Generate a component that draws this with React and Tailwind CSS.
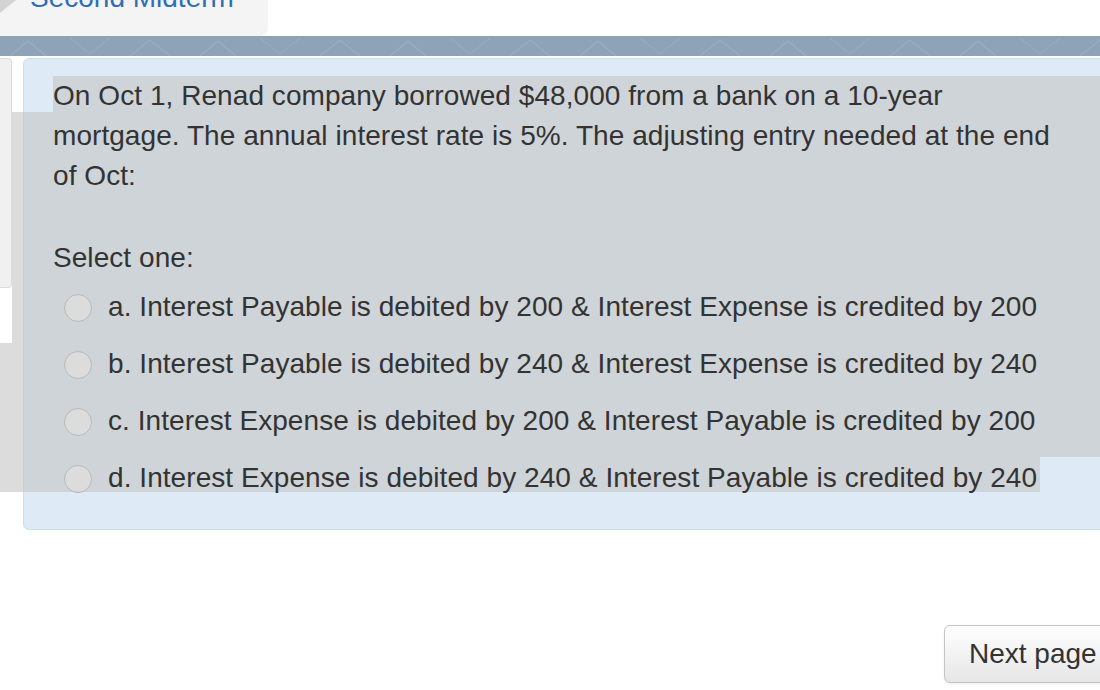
import React from "react";

const options = [
  "a. Interest Payable is debited by 200 & Interest Expense is credited by 200",
  "b. Interest Payable is debited by 240 & Interest Expense is credited by 240",
  "c. Interest Expense is debited by 200 & Interest Payable is credited by 200",
  "d. Interest Expense is debited by 240 & Interest Payable is credited by 240",
];

function BandPattern() {
  return (
    <svg width="1100" height="20" viewBox="0 0 1100 20" className="block">
      <defs>
        <pattern id="chev" width="190" height="20" patternUnits="userSpaceOnUse">
          <polyline points="10,20 28,5 46,20" fill="none" stroke="#a9b8c9" strokeWidth="1.2" opacity="0.45" />
          <polyline points="70,2 90,18 110,2" fill="none" stroke="#a9b8c9" strokeWidth="1.2" opacity="0.3" />
          <polyline points="130,20 150,4 170,20" fill="none" stroke="#a9b8c9" strokeWidth="1.2" opacity="0.4" />
        </pattern>
      </defs>
      <rect width="1100" height="20" fill="url(#chev)" />
    </svg>
  );
}

export default function App() {
  return (
    <div className="relative isolate w-[1100px] h-[690px] overflow-hidden bg-white font-['Liberation_Sans',Arial,sans-serif]">
      {/* Tab */}
      <div className="relative h-[36px] w-[268px] overflow-hidden rounded-br-[8px] bg-[#f4f4f4]">
        <svg width="16" height="13" viewBox="0 0 16 13" className="absolute left-0 top-0">
          <polygon points="0,0 16,0 0,13" fill="#d3d3d3" />
        </svg>
        <div className="mt-[-16px] pl-[30px] text-[28px] leading-[28px] whitespace-nowrap text-[#2f6eb3]">
          Second Midterm
        </div>
      </div>

      {/* Band */}
      <div className="h-[20px] bg-[#8fa3b8]">
        <BandPattern />
      </div>
      <div className="h-[2px]" />

      {/* Content row */}
      <div className="flex items-start">
        <div className="h-[230px] w-[12px] shrink-0 rounded-r-[4px] border border-l-0 border-[#dcdcdc] bg-[#f0f0f0]" />
        <div className="ml-[11px] w-[1110px] shrink-0">
          <div className="rounded-[6px] border border-[#c4e2ee] bg-[#deebf6] pt-[17px] pb-[23px] pl-[29px] text-[28px] tracking-[0.06px] text-[#333333]">
            <div className="leading-[40px] whitespace-nowrap">
              <span className="relative z-[2]">
                On Oct 1, Renad company borrowed $48,000 from a bank on a 10-year
                <br />
                mortgage. The annual interest rate is 5%. The adjusting entry needed at the end
                <br />
                of Oct:
              </span>
            </div>
            <div className="mt-[42px] leading-[40px]">
              <span className="relative z-[2]">Select one:</span>
            </div>
            <div className="flex flex-col">
              {options.map((o) => (
                <div key={o} className="flex h-[57px] items-center pl-[11px]">
                  <div className="mt-[3px] h-[28px] w-[28px] shrink-0 rounded-full border border-[#a8a8a8] bg-white" />
                  <span className="relative z-[2] ml-[16px] leading-[40px] whitespace-nowrap">{o}</span>
                </div>
              ))}
            </div>
          </div>
          <div className="mt-[95px] pl-[921px]">
            <button className="h-[58px] whitespace-nowrap rounded-[6px] border border-[#c4c4c4] bg-linear-to-b from-white to-[#e6e6e6] px-[24px] text-left text-[28px] text-[#333333] shadow-[0_1px_2px_rgba(0,0,0,0.08)]">
              Next page
            </button>
          </div>
        </div>
      </div>

      {/* Selection highlight (lies over the backgrounds, under the text) */}
      <div className="pointer-events-none absolute left-[53px] top-[76px] z-[1] h-[36px] w-[1047px] bg-[rgba(197,197,197,0.6)]" />
      <div className="pointer-events-none absolute left-[12px] top-[112px] z-[1] h-[231px] w-[1088px] bg-[rgba(197,197,197,0.6)]" />
      <div className="pointer-events-none absolute left-0 top-[343px] z-[1] h-[114px] w-[1100px] bg-[rgba(197,197,197,0.6)]" />
      <div className="pointer-events-none absolute left-0 top-[457px] z-[1] h-[35px] w-[1040px] bg-[rgba(197,197,197,0.6)]" />
    </div>
  );
}
